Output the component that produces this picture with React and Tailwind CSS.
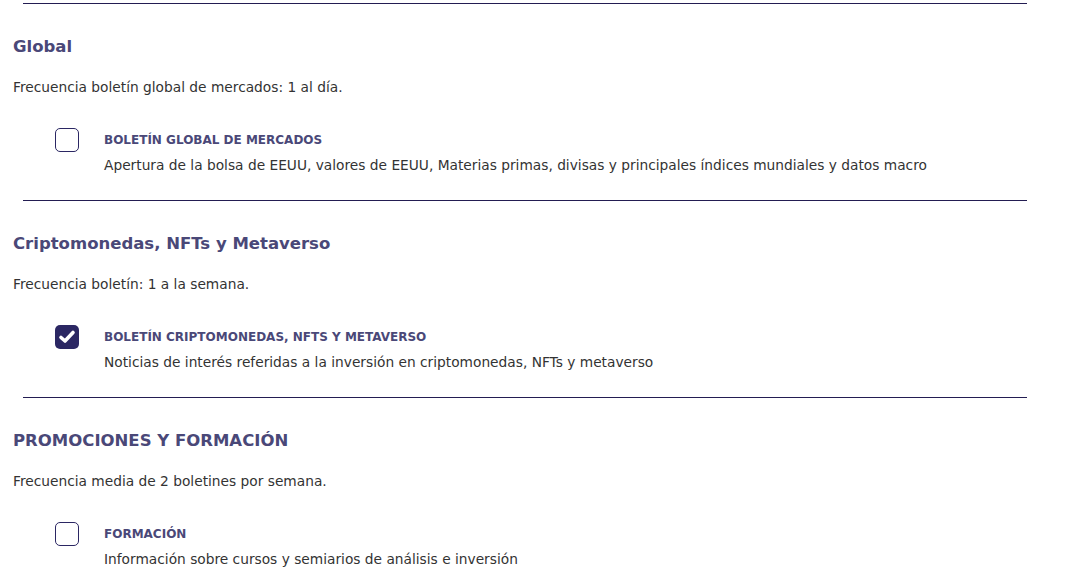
import React from 'react';

const sections = [
  {
    title: 'Global',
    freq: 'Frecuencia boletín global de mercados: 1 al día.',
    item: 'BOLETÍN GLOBAL DE MERCADOS',
    desc: 'Apertura de la bolsa de EEUU, valores de EEUU, Materias primas, divisas y principales índices mundiales y datos macro',
    checked: false,
  },
  {
    title: 'Criptomonedas, NFTs y Metaverso',
    freq: 'Frecuencia boletín: 1 a la semana.',
    item: 'BOLETÍN CRIPTOMONEDAS, NFTS Y METAVERSO',
    desc: 'Noticias de interés referidas a la inversión en criptomonedas, NFTs y metaverso',
    checked: true,
  },
  {
    title: 'PROMOCIONES Y FORMACIÓN',
    freq: 'Frecuencia media de 2 boletines por semana.',
    item: 'FORMACIÓN',
    desc: 'Información sobre cursos y semiarios de análisis e inversión',
    checked: false,
  },
];

function Checkbox({ checked }) {
  if (checked) {
    return (
      <div className="w-6 h-6 shrink-0 rounded-[5px] bg-[#2b2763] flex items-center justify-center">
        <svg width="18" height="18" viewBox="0 0 18 18">
          <path d="M3 9.5 L7 13 L15 4.5" fill="none" stroke="#fff" strokeWidth="3.6" strokeLinecap="round" strokeLinejoin="round" />
        </svg>
      </div>
    );
  }
  return <div className="w-6 h-6 shrink-0 rounded-[5px] border border-[#2b2763] bg-white" />;
}

export default function App() {
  return (
    <div className="w-[1069px] h-[569px] overflow-hidden bg-white pt-[3px] font-['DejaVu_Sans',sans-serif]">
      {sections.map((s) => (
        <section key={s.title}>
          <div className="h-px ml-[23px] w-[1004px] bg-[#231d52]" />
          <div className="pl-[13px] pt-[31px] pb-[24px]">
            <h2 className="text-[16.5px] leading-[24px] font-bold text-[#4a4878]">{s.title}</h2>
            <p className="mt-[18px] text-[13.75px] leading-[21px] text-[#333]">{s.freq}</p>
            <div className="mt-[30px] ml-[42px] flex items-start">
              <Checkbox checked={s.checked} />
              <div className="ml-[25px] mt-[2px]">
                <div className="text-[12px] leading-[21px] font-bold text-[#4a4878]">{s.item}</div>
                <div className="mt-[4px] text-[13.75px] leading-[21px] text-[#333]">{s.desc}</div>
              </div>
            </div>
          </div>
        </section>
      ))}
    </div>
  );
}
